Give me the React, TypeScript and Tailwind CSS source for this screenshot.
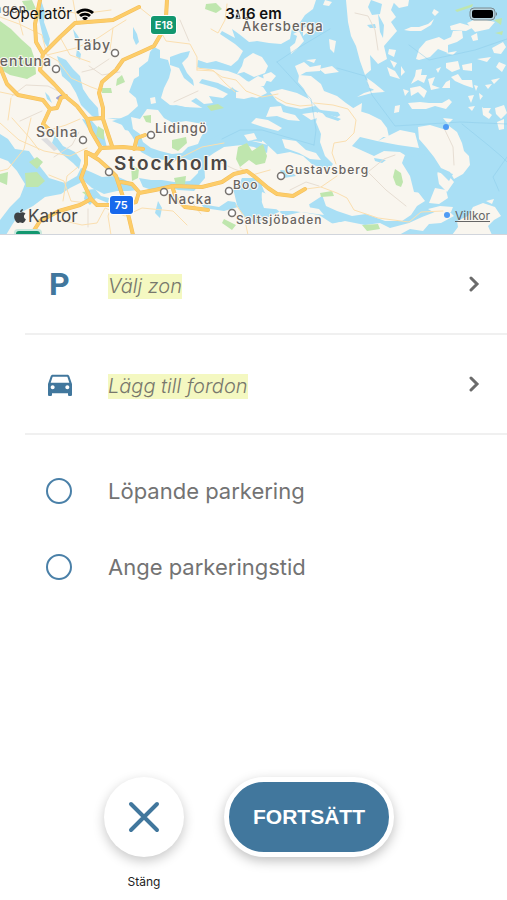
import { useState } from "react";
import { FaApple } from "react-icons/fa";
import { MdDirectionsCar } from "react-icons/md";

type Place = { name: string; x: number; y: number; size: string };

const places: Place[] = [
  { name: "Täby", x: 74, y: 50, size: "text-[14px]" },
  { name: "Åkersberga", x: 242, y: 31, size: "text-[13px]" },
  { name: "Solna", x: 36, y: 137, size: "text-[14px]" },
  { name: "Lidingö", x: 155, y: 133, size: "text-[13px]" },
  { name: "Nacka", x: 168, y: 204, size: "text-[13px]" },
  { name: "Boo", x: 233, y: 189, size: "text-[12px]" },
  { name: "Gustavsberg", x: 285, y: 174, size: "text-[12px]" },
  { name: "Saltsjöbaden", x: 236, y: 224, size: "text-[12px]" },
];

const rings = [
  [115, 53], [56, 69], [83, 140], [151, 135], [109, 172],
  [164, 192], [229, 191], [281, 176], [232, 213],
];

const inlets = [
  "M57 56L66 60L73 69L80 76L83 89L89 98L98 108L99 119L92 116L87 111L81 105L76 93L70 83L62 76L60 67Z",
  "M154 47L160 50L160 58L168 60L171 70L169 78L164 88L161 98L170 105L184 107L205 108L228 112L262 110L262 142L236 139L218 146L204 156L198 163L186 159L170 161L152 158L141 152L132 136L125 126L112 121L119 119L128 115L138 106L136 98L129 92L134 79L139 76L139 68L148 61L150 52Z",
  "M41 0L45 12L44 22L50 39L48 48L44 42L40 24L37 10Z",
  "M73 29L78 36L80 40L75 38ZM77 49L81 54L80 60L76 56ZM133 27L137 34L139 42L136 45L133 38ZM45 92L49 96L52 103L47 99Z",
  "M170 57L181 53L190 51L188 57L182 63L187 73L193 80L194 86L184 78L179 68L170 65Z",
  "M0 134L8 139L15 149L29 151L38 164L49 178L65 183L77 176L81 168L91 172L102 177L116 176L130 182L139 190L128 191L117 191L104 194L92 188L84 181L70 188L61 194L45 197L33 206L20 213L12 225L6 235L0 235L0 220L10 207L20 197L25 184L17 171L8 161L0 158Z",
  "M55 135L63 146L75 152L81 160L79 169L73 163L62 154L52 143Z",
  "M82 119L92 121L104 135L107 148L98 143L90 132ZM107 118L119 120L125 130L135 132L145 124L138 119Z",
  "M86 190L95 189L101 196L109 198L108 203L96 198L90 205L84 199ZM139 178L151 180L162 180L174 182L190 181L198 173L200 150L207 138L220 130L236 134L252 141L268 145L267 153L254 147L242 145L224 147L214 153L204 160L205 178L194 191L178 190L169 187L155 191L143 187Z",
  "M158 201L162 208L160 218L155 213ZM201 204L219 207L228 201L235 202L238 207L224 211L204 208Z",
];

const sea =
  "M316 0L313 9L305 15L299 24L292 28L290 39L281 44L269 43L257 41L249 42L239 34L232 29L235 38L222 31L220 34L235 44L243 51L238 60L231 66L216 61L207 63L198 60L197 67L211 72L227 74L235 85L230 89L218 83L202 79L199 83L216 88L228 94L223 98L209 96L213 103L204 104L196 98L191 101L204 109L190 108L176 105L160 108L155 119L169 130L185 126L202 129L207 141L223 133L244 132L263 141L276 153L291 172L305 190L311 211L281 211L256 223L244 218L237 205L233 188L250 178L260 180L264 191L273 206L290 221L310 228L340 222L367 231L384 235L507 235L507 0Z";

const islands = [
  "M131 117L140 119L147 109L158 110L164 118L173 123L186 121L203 124L206 129L201 137L198 144L188 147L182 153L172 154L160 151L151 148L143 142L140 134L133 129Z",
  "M150 98L155 97L156 103L151 104Z",
  "M244 59L253 53L262 57L268 66L265 73L254 77L244 72L237 74L242 66Z",
  "M196 68L213 69L228 71L239 75L247 81L263 87L267 93L257 98L246 96L234 89L226 81L211 78L198 73Z",
  "M247 83L258 76L267 80L264 86L255 87ZM263 75L271 72L276 76L271 82L264 80ZM236 92L248 91L252 97L244 99L236 98Z",
  "M299 75L311 76L321 84L324 91L337 96L346 103L356 110L369 114L381 120L387 128L389 137L378 137L366 130L356 124L345 122L338 112L320 110L309 99L304 89L298 82Z",
  "M270 92L282 89L297 93L309 99L315 106L301 109L286 106L277 101Z",
  "M270 107L281 106L283 112L295 115L300 121L288 120L277 116L266 117ZM302 114L316 112L324 116L311 120Z",
  "M256 118L268 120L282 128L278 131L263 127L251 123ZM282 139L296 141L306 150L316 153L321 160L310 159L299 153L285 148ZM244 135L254 133L257 139L248 141Z",
  "M295 66L304 62L310 67L321 65L320 71L306 72L299 76Z",
  "M295 43L297 36L293 34L299 31L304 41L297 49L291 54L290 47ZM303 28L313 24L308 32L303 36ZM306 60L316 59L314 63ZM319 69L332 66L339 72L325 74Z",
  "M329 39L336 41L334 53L330 49ZM325 0L332 2L329 6L323 5Z",
  "M346 0L395 0L391 10L396 17L391 22L397 31L390 39L384 46L387 59L378 64L370 55L371 70L365 75L360 61L356 46L351 36L348 22Z",
  "M391 0L409 0L408 6L399 8ZM367 78L374 83L385 92L369 88ZM387 67L395 71L400 79L390 76ZM389 49L396 50L394 57L388 54ZM390 60L397 63L394 68ZM401 66L405 72L401 76Z",
  "M404 30L411 27L419 27L428 24L434 19L431 25L421 31L410 31ZM434 9L439 12L435 16L432 13Z",
  "M416 59L419 49L426 41L439 37L444 40L451 37L453 31L462 31L463 38L457 42L448 45L448 53L438 49L430 57L419 60ZM450 26L460 23L474 27L466 31L451 30ZM467 23L478 18L495 22L489 29L475 32ZM471 36L477 33L478 40L473 41Z",
  "M492 48L503 42L506 47L501 54L494 53ZM477 59L491 57L487 62ZM499 62L506 65L502 72L496 67ZM446 53L457 51L453 55Z",
  "M446 63L458 61L460 69L452 72L446 68ZM462 65L472 63L472 71L463 70ZM451 77L458 74L462 80L472 80L473 88L464 85L455 81Z",
  "M416 70L422 69L421 75L427 75L424 83L418 80L411 84L415 76ZM436 69L441 67L438 73ZM428 79L435 77L432 85L440 88L431 90ZM410 88L420 86L427 91L424 98L418 92L411 96ZM446 82L450 80L450 88L442 88Z",
  "M408 103L420 102L429 103L442 103L449 99L452 102L446 109L435 106L426 109L412 109ZM468 96L474 95L471 103ZM479 93L483 96L480 100ZM485 85L492 84L488 89ZM491 80L500 78L494 84Z",
  "M395 106L400 105L399 112L394 113ZM403 89L409 91L405 96ZM468 107L475 106L472 111ZM495 108L504 105L507 113L501 119L496 114ZM482 107L492 115L489 119L483 115ZM474 85L478 86L476 91Z",
  "M318 112L337 117L350 110L362 103L361 114L357 121L364 125L377 130L384 128L386 135L378 141L400 130L415 133L419 148L398 145L377 141L360 137L352 146L374 156L384 151L400 152L408 157L418 162L420 178L418 192L425 201L417 206L411 215L402 221L385 221L366 214L352 216L337 211L326 206L319 186L327 172L333 164L325 156L320 142L321 134L316 122Z",
  "M443 118L453 119L448 124ZM483 108L491 108L488 113ZM497 122L504 119L504 129L499 130Z",
  "M418 127L430 125L443 129L449 126L457 132L462 143L464 151L469 156L470 165L463 174L454 179L450 172L441 168L434 157L426 147L419 139ZM437 172L448 175L454 182L447 192L439 184ZM427 165L430 172L430 179L426 172Z",
  "M273 155L290 152L303 156L313 165L330 170L336 180L326 186L322 196L302 209L295 204L280 206L270 199L262 186L269 179L284 171L276 165Z",
  "M262 192L272 196L281 205L302 206L319 209L324 215L309 213L284 210L264 208L261 200Z",
  "M284 216L301 212L319 215L333 224L345 221L365 225L380 223L390 228L409 223L422 217L435 212L449 211L454 216L441 223L429 224L423 231L410 229L399 235L292 235L286 227Z",
  "M435 188L446 190L448 198L439 204L429 203ZM428 209L440 206L453 207L451 212L435 213Z",
  "M452 235L458 227L457 221L468 216L473 207L483 203L495 207L501 216L494 220L488 226L492 235ZM486 201L494 199L492 204Z",
  "M357 97L364 93L374 90L368 84L366 80L374 84L384 92L372 93Z",
];

const parks = [
  "M0 21L11 29L22 40L31 48L35 60L36 74L27 79L10 75L0 69Z",
  "M22 1L32 0L36 9L27 11ZM117 79L122 75L125 82L116 86ZM101 88L111 88L112 93L102 93ZM206 4L216 3L222 9L216 13L205 9Z",
  "M25 173L37 172L45 181L38 187L26 187ZM29 162L37 157L43 162L37 169ZM0 174L8 172L7 185L0 182ZM98 126L104 130L104 140L96 136Z",
  "M238 147L247 143L252 151L263 144L267 156L265 163L256 165L249 160L240 167L236 159ZM172 140L186 137L187 143L178 151L172 148ZM174 178L186 176L185 184L176 185ZM143 116L151 115L151 123L146 122Z",
  "M395 169L401 173L403 182L401 187L396 185L393 177ZM362 225L378 224L380 229L367 231ZM455 10L473 4L472 7L457 12ZM494 20L502 18L501 25ZM495 33L503 31L502 35ZM207 106L218 104L224 108L211 111ZM224 219L236 225L232 230L222 223Z",
  "M131 165L139 169L138 178L132 181ZM82 192L90 191L88 197ZM320 193L332 191L334 196L321 197Z",
];

const minorRoads = [
  "M0 17L19 24L42 35L47 55L58 61L71 78L91 87L102 91M47 55L76 48L98 38L113 28L126 20M139 7L154 19L166 41L190 44L197 57L197 70M60 37L70 55L90 62M113 28L110 50M0 92L24 97M23 35L15 5M73 0L77 23M54 9L80 14L111 10",
  "M197 68L212 70L222 77L236 80L246 91L262 97L278 94M227 4L225 20L218 33L211 29M197 70L214 71L225 83L235 92M275 97L286 103L300 106L312 105",
  "M0 123L19 140L44 151L70 156L87 148M12 118L29 137L39 150M31 118L24 149L8 169L0 171M43 132L66 125L80 119M49 175L64 181L71 201L86 203M60 220L82 225L97 223L105 208L125 216L142 208L173 211L187 225M78 167L67 176L63 201M11 98L8 120",
  "M167 165L182 157L202 147L224 143M113 202L108 216L111 235M236 205L244 216L248 235M178 201L193 204L201 214M240 168L242 169L252 175L270 170",
  "M314 103L333 105L348 109L356 120L354 133L346 141L334 143L332 153L336 164M337 176L321 187L337 193L347 198L354 210L378 218L409 222L421 212L443 211M321 187L306 189",
];

const majorRoads = [
  "M40 0L35 24L36 42L43 54M43 54L60 37L75 23L113 20L139 7M43 54L40 70L54 84L65 96L77 106L87 119L91 131L101 148M87 119L103 118",
  "M167 0L166 17L161 34L154 46L141 52L123 60L116 70L102 82L99 93L103 108L103 119L108 134L112 146",
  "M0 67L7 84L18 95L43 100L50 109L57 108L61 98L66 96M50 109L43 124L53 133",
  "M101 148L123 147L143 149M134 149L137 138L145 135M101 148L95 156L86 152L86 164L81 178L91 199L80 205L59 211L40 221L31 235",
  "M86 152L99 160L108 168L116 176L121 191L125 203L129 218L133 235M121 182L132 184L139 192L136 202L123 205L97 205L91 199M139 193L155 190L173 186L202 187L222 182L234 174L247 171L255 177L268 188L277 194L293 196L305 189",
  "M172 186L176 198L185 207L208 210",
];

function MapView() {
  return (
    <section aria-label="Karta" className="relative h-[235px] w-full overflow-hidden border-b border-gray-300 bg-[#f9f6ef]">
      <svg aria-hidden="true" className="h-full w-full" viewBox="0 0 507 234" preserveAspectRatio="xMidYMid slice" fill="none" strokeLinejoin="round" strokeLinecap="round">
        <g fill="#a9dff5">
          {inlets.map((d) => <path key={d} d={d} />)}
          <path d={sea} />
        </g>
        <g fill="#f9f6ef">{islands.map((d) => <path key={d} d={d} />)}</g>
        <g fill="#a9dff5">
          <path d="M371 0L382 4L380 14L372 15L368 7ZM367 25L375 24L376 28L370 28ZM378 14L384 25L383 38L380 32Z" />
          <path d="M405 155L415 157L425 154L438 171L434 184L422 193L414 192L410 176L402 163Z" />
          <path d="M242 178L259 178L262 200L257 218L245 216L238 205L236 191ZM280 170L291 171L296 176L284 178ZM437 169L453 174L449 181Z" />
          <path d="M374 158L386 160L382 163L375 161ZM319 109L328 114L341 119L338 121L326 117Z" />
        </g>
        <g fill="#bfe6ae">{parks.map((d) => <path key={d} d={d} />)}</g>
        <path d="M41 139L47 138L58 149L54 151Z" fill="#dedee0" />
        <path d="M57 98L62 95L60 100Z" fill="#9fa3cf" stroke="#9fa3cf" strokeWidth="2" />
        <g stroke="#8bcbea" strokeWidth="1" opacity="0.5">
          <path d="M277 62L311 99L316 130L314 145M277 62L298 48L330 29M222 139L240 130L262 130L314 145M409 45L429 60L475 50L507 39M337 68L365 76L372 95L395 126L460 122L507 124M462 124L488 145L501 156L507 162M499 191L493 177L507 157" />
        </g>
        <g stroke="#e7ded3" strokeWidth="1">
          <path d="M12 96L26 85L48 86L60 92M89 66L102 75L120 72M109 59L94 69L82 72M54 157L72 145L79 132M20 121L42 111M88 209L88 227M213 159L234 169L245 173M290 190L306 182L319 186M368 172L384 159L395 155M368 172L386 190L406 206M180 20L189 41M174 102L198 91M355 13L368 16L375 30L378 50M444 128L453 147L454 165" />
        </g>
        <g stroke="#fbdfb0" strokeWidth="1">{minorRoads.map((d) => <path key={d} d={d} />)}</g>
        <g stroke="#f3be5c" strokeWidth="4">{majorRoads.map((d) => <path key={d} d={d} />)}</g>
        <g stroke="#fdcd69" strokeWidth="3">{majorRoads.map((d) => <path key={d} d={d} />)}</g>
        <g fill="#fff" stroke="#77736f" strokeWidth="1.5">
          {rings.map(([cx, cy]) => <circle key={cx} cx={cx} cy={cy} r="3.5" />)}
        </g>
        <circle cx="446" cy="127" r="3" fill="#4f9bf4" />
        <circle cx="447" cy="215" r="3" fill="#4f9bf4" />
        <path d="M236 18L238 11L240 18Z" stroke="#555" fill="#fff" />
        <rect x="150" y="15" width="27" height="20" rx="4" fill="#fff" />
        <rect x="151" y="16" width="25" height="18" rx="3" fill="#12976f" />
        <rect x="109" y="195" width="25" height="20" rx="4" fill="#fff" />
        <rect x="110" y="196" width="23" height="18" rx="3" fill="#1768ec" />
        <rect x="14" y="229" width="28" height="12" rx="4" fill="#c9e8dd" />
        <rect x="16" y="231" width="24" height="12" rx="3" fill="#12976f" />
        <g className="font-['Inter',sans-serif] font-medium" strokeLinejoin="round">
          <g fill="#68635f" stroke="#fbf9f4" strokeWidth="2" paintOrder="stroke" className="tracking-[1px]">
            {places.map((p) => <text key={p.name} x={p.x} y={p.y} className={p.size}>{p.name}</text>)}
            <text x="52" y="66" textAnchor="end" className="text-[14px]">entuna</text>
            <text x="27" y="13" textAnchor="end" className="text-[12px]">ngen</text>
            <text x="114" y="170" fill="#4b4744" className="text-[19px] font-semibold tracking-[2px]">Stockholm</text>
          </g>
          <g fill="#fff" textAnchor="middle" className="text-[11px] font-semibold">
            <text x="164" y="29">E18</text>
            <text x="121" y="209">75</text>
          </g>
        </g>
      </svg>
      <header className="absolute inset-x-0 top-0 grid h-7 grid-cols-3 items-center px-[9px] text-[15px] text-[#111]">
        <div className="flex items-center gap-1">
          <span>Operatör</span>
          <svg aria-label="Wi-Fi" className="h-3 w-[18px]" viewBox="0 0 18 12">
            <path d="M0 4A13 13 0 0 1 18 4L16 6A10 10 0 0 0 2 6Z" fill="#000" />
            <path d="M3 7A9 9 0 0 1 15 7L13 9A6 6 0 0 0 5 9Z" fill="#000" />
            <path d="M6 10A4 4 0 0 1 12 10L9 13Z" fill="#000" />
          </svg>
        </div>
        <time className="text-center font-semibold">3:16 em</time>
        <svg aria-label="Batteri" className="h-[14px] w-[29px] justify-self-end" viewBox="0 0 29 14">
          <rect x="1" y="1" width="25" height="12" rx="4" fill="#b9d5df" stroke="#7b8b91" />
          <rect x="3" y="3" width="21" height="8" rx="2" fill="#000" />
          <path d="M27 5Q29 7 27 9Z" fill="#6b797e" />
        </svg>
      </header>
      <div className="absolute inset-x-0 bottom-[6px] flex items-center justify-between pr-[17px] pl-3 text-[#4a4a4a]">
        <div className="flex items-center text-[17px] leading-6">
          <FaApple aria-hidden="true" className="size-4 text-[#3e4244]" />
          Kartor
        </div>
        <a href="#villkor" className="text-[12px] leading-4 text-[#666] underline">Villkor</a>
      </div>
    </section>
  );
}

function Chevron() {
  return (
    <svg aria-hidden="true" className="ml-auto h-4 w-[11px]" viewBox="0 0 11 16" fill="none" stroke="#6b6b6b" strokeWidth="3">
      <path d="M2 2L8 8L2 14" strokeLinecap="round" />
    </svg>
  );
}

const rowClass = "flex h-[100px] w-full cursor-pointer items-center border-b-2 border-[#f0f0f0] pr-[27px] text-left";
const markClass = "mt-1 bg-[#f4f8c1] text-[20px] leading-[25px] font-light text-[#77776c] italic";

export default function App() {
  const [mode, setMode] = useState("");
  const options = [
    { id: "lopande", label: "Löpande parkering" },
    { id: "tid", label: "Ange parkeringstid" },
  ];
  return (
    <main className="flex min-h-screen flex-col bg-white font-['Inter',sans-serif]">
      <MapView />
      <div className="pl-[25px]">
        <button type="button" className={rowClass}>
          <span className="w-[83px] pl-[24px] font-['Roboto',sans-serif] text-[32px] leading-8 font-bold text-[#41779d]">P</span>
          <mark className={markClass}>Välj zon</mark>
          <Chevron />
        </button>
        <button type="button" className={rowClass}>
          <span className="w-[83px] pl-[19px]">
            <MdDirectionsCar aria-hidden="true" className="size-8 text-[#41779d]" />
          </span>
          <mark className={markClass}>Lägg till fordon</mark>
          <Chevron />
        </button>
      </div>
      <div role="radiogroup" aria-label="Parkeringstyp" className="pt-[18px] pl-[46px]">
        {options.map((o) => (
          <label key={o.id} className="flex h-[76px] cursor-pointer items-center gap-9 text-[22px] text-[#737373]">
            <input
              type="radio"
              name="parkering"
              value={o.id}
              checked={mode === o.id}
              onChange={() => setMode(o.id)}
              className="size-[26px] appearance-none rounded-full border-2 border-[#4a80a8] checked:border-8"
            />
            {o.label}
          </label>
        ))}
      </div>
      <footer className="mt-auto flex items-start justify-center gap-10 pr-[9px] pb-[10px]">
        <div className="flex w-20 flex-col items-center gap-[17px]">
          <button type="button" aria-labelledby="close-label" className="flex size-20 cursor-pointer items-center justify-center rounded-full bg-white shadow-[0_4px_12px_rgba(0,0,0,0.22)]">
            <svg aria-hidden="true" className="size-8" viewBox="0 0 32 32" stroke="#41779d" strokeWidth="4" strokeLinecap="round">
              <path d="M3 3L29 29M29 3L3 29" />
            </svg>
          </button>
          <span id="close-label" className="text-[12px] leading-4 text-[#222]">Stäng</span>
        </div>
        <button type="button" className="h-20 w-[170px] cursor-pointer rounded-full border-[5px] border-white bg-[#41779d] font-['Liberation_Sans',sans-serif] text-[21px] font-bold text-white shadow-[0_4px_12px_rgba(0,0,0,0.25)]">
          FORTSÄTT
        </button>
      </footer>
    </main>
  );
}
